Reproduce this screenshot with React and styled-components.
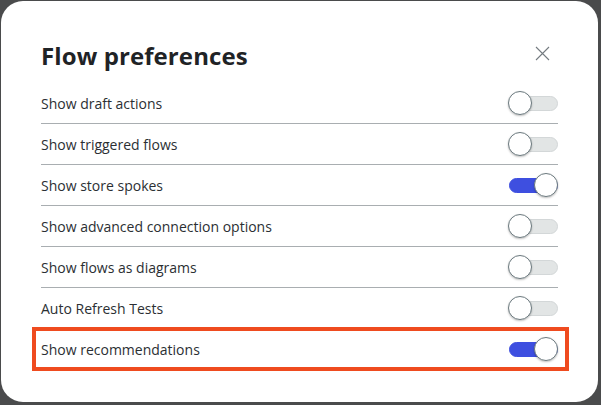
import { useState } from "react";
import styled, { createGlobalStyle } from "styled-components";

const GlobalStyle = createGlobalStyle`
    html, body {
        margin: 0;
        padding: 0;
        background: #4a4b4c;
        font-family: "Open Sans", "Noto Sans", sans-serif;
    }
`;

const Modal = styled.div`
    box-sizing: border-box;
    width: 597px;
    height: 401px;
    margin: 1px 0 0 1px;
    background: #fff;
    border-radius: 22px;
    padding: 0 40px 0 40px;
    display: flex;
    flex-direction: column;
`;

const Header = styled.div`
    height: 82px;
    padding-top: 39px;
    box-sizing: border-box;
    display: flex;
    align-items: flex-start;
    justify-content: space-between;
`;

const Title = styled.h2`
    margin: 0;
    font-size: 24px;
    line-height: 32px;
    font-weight: 700;
    color: #1f2326;
    letter-spacing: 0.1px;
`;

const CloseButton = styled.button`
    border: none;
    background: none;
    padding: 0;
    margin: 6px 8px 0 0;
    width: 15px;
    height: 15px;
    cursor: pointer;
    display: flex;
`;

const List = styled.div`
    display: flex;
    flex-direction: column;
`;

const Row = styled.div`
    position: relative;
    height: 41px;
    box-sizing: border-box;
    display: flex;
    align-items: center;
    justify-content: space-between;
    border-bottom: ${(p) => (p.$last ? "none" : "1px solid #a9aeb1")};
    padding-top: 1px;

    ${(p) =>
        p.$highlight &&
        `
        &::after {
            content: "";
            position: absolute;
            left: -9px;
            right: -11px;
            top: -2px;
            bottom: -1px;
            border: 4px solid #ef4b1f;
            pointer-events: none;
        }
    `}
`;

const Label = styled.span`
    font-size: 14px;
    color: #2b2f33;
    line-height: 20px;
`;

const Track = styled.button`
    position: relative;
    width: 50px;
    height: 26px;
    border: none;
    padding: 0;
    background: none;
    cursor: pointer;

    &::before {
        content: "";
        position: absolute;
        left: 1px;
        right: 0;
        top: 5px;
        height: 15px;
        border-radius: 8px;
        box-sizing: border-box;
        background: ${(p) => (p.$on ? "#3e4fe0" : "#e2e5e5")};
        border: 1px solid ${(p) => (p.$on ? "#3e4fe0" : "#d3d7d8")};
    }
`;

const Knob = styled.span`
    position: absolute;
    top: 0;
    left: ${(p) => (p.$on ? "26px" : "0")};
    width: 24px;
    height: 24px;
    box-sizing: border-box;
    border-radius: 50%;
    background: #fff;
    border: 1px solid #6c7a7f;
    box-shadow: 0 1px 2px rgba(0, 0, 0, 0.25);
`;

function Toggle({ on, onClick }) {
    return (
        <Track $on={on} onClick={onClick} aria-pressed={on}>
            <Knob $on={on} />
        </Track>
    );
}

const initial = [
    { label: "Show draft actions", on: false },
    { label: "Show triggered flows", on: false },
    { label: "Show store spokes", on: true },
    { label: "Show advanced connection options", on: false },
    { label: "Show flows as diagrams", on: false },
    { label: "Auto Refresh Tests", on: false },
    { label: "Show recommendations", on: true, highlight: true },
];

export default function App() {
    const [prefs, setPrefs] = useState(initial);
    const flip = (i) =>
        setPrefs(prefs.map((p, j) => (j === i ? { ...p, on: !p.on } : p)));

    return (
        <>
            <GlobalStyle />
            <Modal>
                <Header>
                    <Title>Flow preferences</Title>
                    <CloseButton aria-label="Close">
                        <svg width="15" height="15" viewBox="0 0 15 15">
                            <path
                                d="M1 1 L14 14 M14 1 L1 14"
                                stroke="#747b80"
                                strokeWidth="1.1"
                                fill="none"
                            />
                        </svg>
                    </CloseButton>
                </Header>
                <List>
                    {prefs.map((p, i) => (
                        <Row
                            key={p.label}
                            $highlight={p.highlight}
                            $last={i === prefs.length - 1}
                        >
                            <Label>{p.label}</Label>
                            <Toggle on={p.on} onClick={() => flip(i)} />
                        </Row>
                    ))}
                </List>
            </Modal>
        </>
    );
}
